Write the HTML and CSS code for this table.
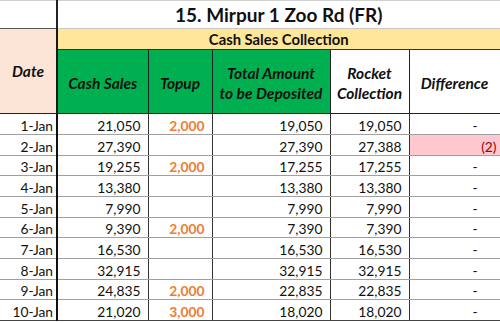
FILE: index.html
```html
<!DOCTYPE html>
<html>
<head>
<meta charset="utf-8">
<link rel="stylesheet" href="styles.css">
</head>
<body>
<table class="sheet">
  <colgroup>
    <col class="c-date">
    <col class="c-cash">
    <col class="c-topup">
    <col class="c-total">
    <col class="c-rocket">
    <col class="c-diff">
  </colgroup>
  <thead>
    <tr class="r-title">
      <th class="blank"></th>
      <th class="title" colspan="5">15. Mirpur 1 Zoo Rd (FR)</th>
    </tr>
    <tr class="r-group">
      <th class="date-h" rowspan="2">Date</th>
      <th class="group" colspan="5">Cash Sales Collection</th>
    </tr>
    <tr class="r-head">
      <th class="green">Cash Sales</th>
      <th class="green">Topup</th>
      <th class="green">Total Amount<br>to be Deposited</th>
      <th class="white">Rocket<br>Collection</th>
      <th class="white">Difference</th>
    </tr>
  </thead>
  <tbody>
    <tr><td class="d">1-Jan</td><td class="n">21,050</td><td class="n t">2,000</td><td class="n">19,050</td><td class="n">19,050</td><td class="z">-</td></tr>
    <tr><td class="d">2-Jan</td><td class="n">27,390</td><td class="n t"></td><td class="n">27,390</td><td class="n">27,388</td><td class="neg">(2)</td></tr>
    <tr><td class="d">3-Jan</td><td class="n">19,255</td><td class="n t">2,000</td><td class="n">17,255</td><td class="n">17,255</td><td class="z">-</td></tr>
    <tr><td class="d">4-Jan</td><td class="n">13,380</td><td class="n t"></td><td class="n">13,380</td><td class="n">13,380</td><td class="z">-</td></tr>
    <tr><td class="d">5-Jan</td><td class="n">7,990</td><td class="n t"></td><td class="n">7,990</td><td class="n">7,990</td><td class="z">-</td></tr>
    <tr><td class="d">6-Jan</td><td class="n">9,390</td><td class="n t">2,000</td><td class="n">7,390</td><td class="n">7,390</td><td class="z">-</td></tr>
    <tr><td class="d">7-Jan</td><td class="n">16,530</td><td class="n t"></td><td class="n">16,530</td><td class="n">16,530</td><td class="z">-</td></tr>
    <tr><td class="d">8-Jan</td><td class="n">32,915</td><td class="n t"></td><td class="n">32,915</td><td class="n">32,915</td><td class="z">-</td></tr>
    <tr><td class="d">9-Jan</td><td class="n">24,835</td><td class="n t">2,000</td><td class="n">22,835</td><td class="n">22,835</td><td class="z">-</td></tr>
    <tr><td class="d">10-Jan</td><td class="n">21,020</td><td class="n t">3,000</td><td class="n">18,020</td><td class="n">18,020</td><td class="z">-</td></tr>
  </tbody>
</table>
</body>
</html>
```
FILE: styles.css
```css
html, body {
  margin: 0;
  padding: 0;
  background: #ffffff;
}

.sheet {
  border-collapse: collapse;
  table-layout: fixed;
  width: 500px;
  font-family: Lato, "Open Sans", sans-serif;
  color: #111;
}

.c-date { width: 57px; }
.c-cash { width: 91px; }
.c-topup { width: 64px; }
.c-total { width: 118px; }
.c-rocket { width: 79px; }
.c-diff { width: 91px; }

th, td {
  padding: 0;
  overflow: hidden;
  white-space: nowrap;
}

/* title row */
.r-title { height: 28px; }
.r-title th {
  border-top: 1px solid #d0d0d0;
}
.blank {
  background: #fff;
  border-right: 2px solid #222;
  border-bottom: 1px solid #555;
}
.title {
  font-size: 19px;
  font-weight: 700;
  text-align: center;
  vertical-align: bottom;
  padding-bottom: 2px;
  border-right: 1px solid #cfcfcf;
  border-bottom: 1px solid #c8c8c8;
}

/* group row */
.r-group { height: 21px; }
.group {
  background: #ffe699;
  font-size: 14.8px;
  font-weight: 700;
  text-align: center;
  vertical-align: bottom;
  padding-bottom: 1px;
  border-bottom: 1px solid #333;
  border-right: 1px solid #333;
}
.date-h {
  background: #fce4d6;
  font-size: 15.5px;
  font-weight: 700;
  font-style: italic;
  text-align: center;
  border-right: 2px solid #1a1a1a;
  border-bottom: 1px solid #222;
}

/* header row */
.r-head { height: 64px; }
.r-head th {
  font-size: 15.5px;
  font-weight: 700;
  font-style: italic;
  line-height: 20px;
  text-align: center;
  border-right: 1px solid #222;
  border-bottom: 1px solid #222;
  padding-top: 2px;
}
.r-head .green { background: #00b050; }
.r-head .white { background: #fff; }

/* body rows */
tbody tr { height: 21px; }
tbody tr:nth-child(3n) { height: 20px; }
tbody td {
  font-size: 13.8px;
  vertical-align: middle;
  padding-top: 2px;
  border-bottom: 1px solid #a0a0a0;
  border-right: 1px solid #333;
}
tbody tr:last-child td { border-bottom: 1px solid #444; }

.d {
  text-align: right;
  padding-right: 3px;
  border-right: 2px solid #111 !important;
}
.n {
  text-align: right;
  padding-right: 7px;
}
.t {
  color: #ed7d31;
  font-weight: 700;
}
.z {
  text-align: right;
  padding-right: 22px;
}
.neg {
  background: #ffc7ce;
  color: #9c0006;
  text-align: right;
  padding-right: 3px;
}
```
